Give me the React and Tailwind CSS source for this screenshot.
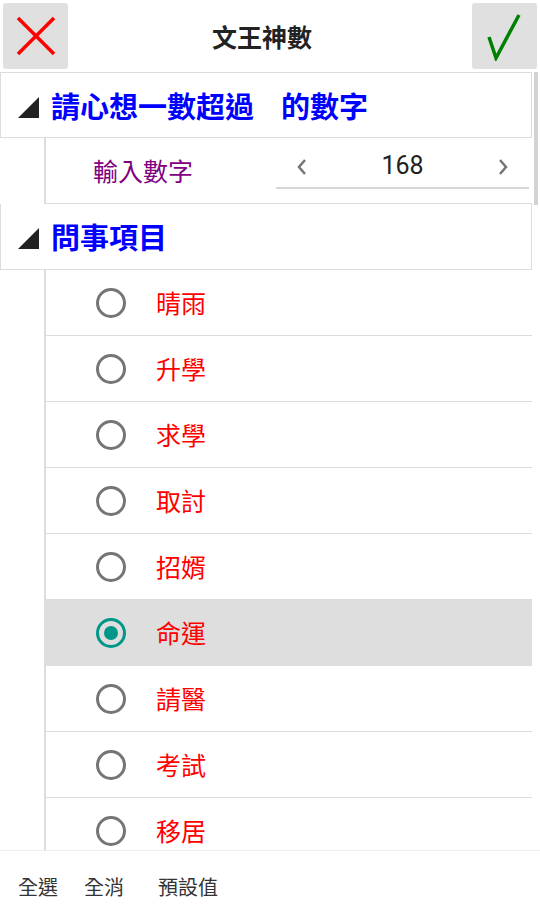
// App.jsx
import { useState } from "react";

const items = ["晴雨", "升學", "求學", "取討", "招婿", "命運", "請醫", "考試", "移居"];

const font = { fontFamily: '"Noto Sans CJK TC", "Noto Sans", sans-serif' };

const SectionHeader = ({ children, first }) => (
  <div
    className={`shrink-0 flex items-center h-[66px] border-x border-b border-[#dddddd] ${
      first ? "border-t" : ""
    }`}
  >
    <svg width="21" height="21" viewBox="0 0 21 21" className="ml-[17px] mt-[4px]">
      <polygon points="21,0 21,21 0,21" fill="#222222" />
    </svg>
    <div className="ml-[12px] flex text-[29px] font-bold text-[#0000ff] leading-none">{children}</div>
  </div>
);

const App = () => {
  const [selected, setSelected] = useState("命運");
  const [num, setNum] = useState(168);

  return (
    <div className="w-[540px] h-[922px] flex flex-col bg-white overflow-hidden" style={font}>
      {/* top bar */}
      <div className="h-[72px] shrink-0 flex items-start justify-between px-[3px] pt-[3px]">
        <button className="w-[65px] h-[66px] rounded-[3px] bg-[#e0e0e0] flex items-center justify-center">
          <svg width="40" height="40" viewBox="0 0 40 40">
            <path d="M2 2 L38 38 M38 2 L2 38" stroke="#ff0000" strokeWidth="3.5" />
          </svg>
        </button>
        <div className="text-[25px] font-bold text-[#222222] mt-[15px] mr-[16px]">文王神數</div>
        <button className="w-[65px] h-[66px] rounded-[3px] bg-[#e0e0e0] flex items-center justify-center">
          <svg width="40" height="50" viewBox="0 0 40 50">
            <path d="M5 26 L12 47 L35 4" stroke="#008000" strokeWidth="3.5" fill="none" strokeLinejoin="miter" />
          </svg>
        </button>
      </div>

      {/* scroll area */}
      <div className="flex-1 min-h-0 flex overflow-hidden">
        <div className="w-[532px] flex flex-col">
          <SectionHeader first>
            <span>請心想一數超過</span>
            <span className="ml-[27px]">的數字</span>
          </SectionHeader>
          <div className="shrink-0 ml-[44px] h-[66px] flex items-center border-l-2 border-b border-[#dddddd]">
            <span className="ml-[47px] text-[25px] text-[#800080]">輸入數字</span>
            <div className="self-start mt-[7px] ml-[83px] w-[253px] h-[44px] flex items-center justify-between border-b-2 border-[#d6d6d6]">
              <button onClick={() => setNum(num - 1)} className="ml-[21px] mt-[2px]">
                <svg width="10" height="16" viewBox="0 0 10 16">
                  <polyline points="8,1 2,8 8,15" stroke="#757575" strokeWidth="2.5" fill="none" />
                </svg>
              </button>
              <span className="text-[25px] text-[#222222]" style={{ fontFamily: "Roboto, sans-serif" }}>
                {num}
              </span>
              <button onClick={() => setNum(num + 1)} className="mr-[21px] mt-[2px]">
                <svg width="10" height="16" viewBox="0 0 10 16">
                  <polyline points="2,1 8,8 2,15" stroke="#757575" strokeWidth="2.5" fill="none" />
                </svg>
              </button>
            </div>
          </div>

          <SectionHeader>
            <span>問事項目</span>
          </SectionHeader>
          {items.map((item) => {
            const on = item === selected;
            return (
              <div
                key={item}
                onClick={() => setSelected(item)}
                className={`ml-[44px] h-[66px] shrink-0 flex items-center border-l-2 border-b border-[#dddddd] ${
                  on ? "bg-[#dedede]" : ""
                }`}
              >
                <div
                  className={`ml-[50px] w-[30px] h-[30px] rounded-full border-[3px] flex items-center justify-center ${
                    on ? "border-[#009688]" : "border-[#757575]"
                  }`}
                >
                  {on && <div className="w-[14px] h-[14px] rounded-full bg-[#009688]" />}
                </div>
                <span className="ml-[30px] text-[25px] text-[#ff0000]">{item}</span>
              </div>
            );
          })}
        </div>
        <div className="ml-[2px] w-[4px] h-[133px] bg-[#d2d2d2]" />
      </div>

      {/* bottom bar */}
      <div className="h-[72px] shrink-0 border-t border-[#eeeeee] flex items-center text-[20px] text-[#333333]">
        <button className="ml-[18px]">全選</button>
        <button className="ml-[26px]">全消</button>
        <button className="ml-[34px]">預設值</button>
      </div>
    </div>
  );
};

export default App;
